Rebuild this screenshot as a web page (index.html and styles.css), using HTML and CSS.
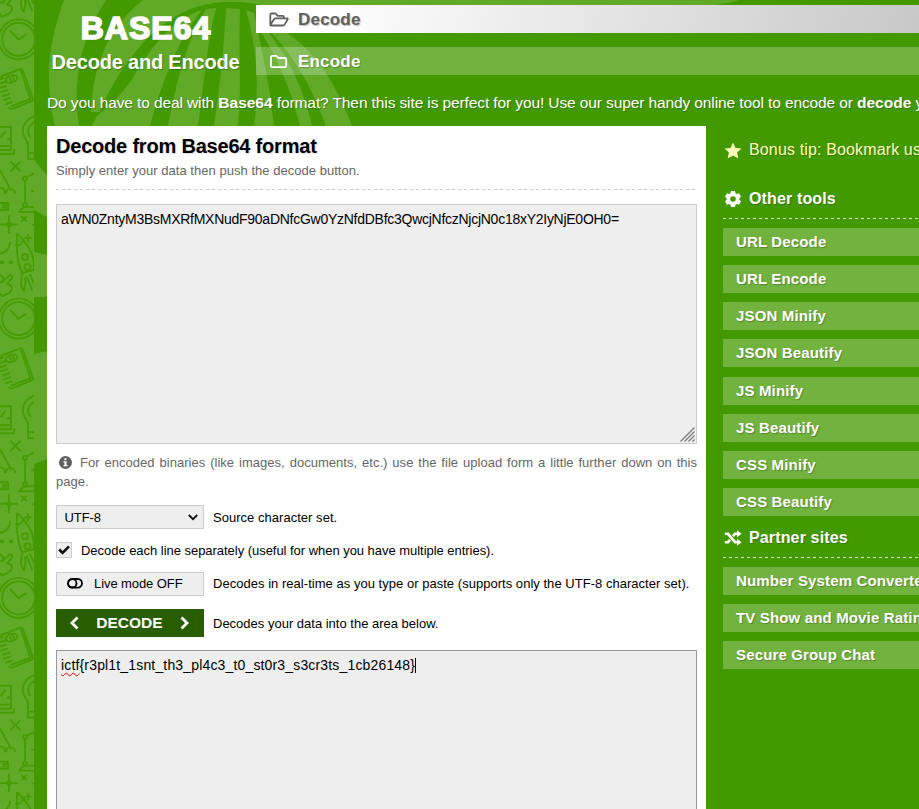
FILE: index.html
```html
<!DOCTYPE html>
<html lang="en">
<head>
<meta charset="utf-8">
<title>Base64 Decode and Encode</title>
<link rel="stylesheet" href="styles.css">
</head>
<body>
<svg class="backdrop" width="919" height="809" viewBox="0 0 919 809" aria-hidden="true">
  <g class="leaf">
    <path d="M64 0C54 28 49 52 49 74C49 94 51 112 55 126L79 126C76 106 76 92 78 76C80 52 90 24 106 0Z"/>
    <path d="M143 0L739 0Q727 4 715 5L262 5Q228 -2 200 6C178 12 158 26 142 44C124 64 110 88 99 112L91 112C92 84 98 60 110 38C118 24 130 10 143 0Z"/>
    <path d="M202 10C178 38 160 88 150 126L92 126L97 116C112 104 124 92 134 76C150 50 170 20 202 10Z"/>
    <path d="M206 9L216 8C208 38 204 84 198 126L168 126C176 84 186 42 206 9Z"/>
    <path d="M226 8L240 9C238 44 242 84 238 126L214 126C220 84 224 48 226 8Z"/>
    <path d="M246 10L254 13C260 42 270 84 274 126L254 126C260 84 256 44 246 10Z"/>
    <path d="M256 24C272 48 290 84 300 126L312 126C302 82 284 48 256 18Z"/>
    <path d="M256 18C302 32 332 72 352 126L326 126C310 82 290 48 256 18Z"/>
    <path d="M34 160Q40 168 47 175L47 217L34 210ZM34 252L47 255L47 297L34 297ZM34 354L47 351L47 459L34 464Z"/>
  </g>
  <rect class="leaf" width="34" height="809"/>
  <svg width="34" height="809">
    <defs>
      <g id="doodles">
        <circle cx="18.7" cy="39.3" r="20"/><circle cx="18.7" cy="39.3" r="16.5"/>
        <path d="M10.500 31l8 8.500 7-4.500"/>
        <path d="M1 76.500L20 69q2-.6 2.700 1l10 28.500q.6 2-1.200 2.600L12 109q-2 .6-2.700-1.200"/>
        <path d="M21 71l9.500 28-19 7M-2 80l5-2M-1 84l6-2M0 88l6-2M1 92l6-2M3 96l6-2M4 100l6-2M6 104l6-2"/>
        <ellipse cx="11.500" cy="79" rx="6" ry="3.500" transform="rotate(-18 11.500 79)"/><path d="M10 78l1 3M13 77l1 3"/>
        <path d="M-1 127H11V150H-1M-1 154H14V150M0 146h9M1 137l4-5"/><circle cx="8.500" cy="139" r=".6"/>
        <path d="M36 116c-9 2-14 9-13 17 .6 5 5 8 5 12v14h8M28 153h7M36 122c-7 2-10 9-6 15"/>
        <path d="M11 162l9 9M20 162l-9 9"/>
        <path d="M0 170L11 190M0 188a4.500 4.500 0 0 1 5 5M6 193a4.500 4.500 0 0 1 9 0"/>
        <circle cx="25" cy="178.500" r="2"/><circle cx="25" cy="205" r="2"/>
        <path d="M25 181v22M27 177l8-4M32 191h3M19 212q4-5 7-5h9M19 212h16"/>
        <path d="M-1 203H8v7H-1M3 205l3 3M6 205l-3 3"/>
        <path d="M9 216v17M1 224.500h16"/><circle cx="9" cy="224.500" r="1.700"/>
        <path d="M22 217l4 4M26 217l-4 4M28 235v6M25 238h6M10 243q-1 9-11 11M33 225h2"/>
        <path class="dots" d="M0 260.500h4v3.500h-4zM9 260.500h4v3.500h-4z"/>
        <path d="M17 234c2 1 11 10 15 20 2 7 2 12 2 16l-12 3c-3-6-5-18-5-24zM16 245h4l4-5"/>
        <circle cx="25" cy="257" r="3"/><circle cx="27.500" cy="267" r="3"/>
        <path d="M22 273l-1 10q0 5 3 8 2-8 1-13M27 277l5 13M30 275l4 8"/>
        <path d="M-1 282h4q2-4-3-7M3 281l7-6q3 0 2 3l-5 6q5 1 5 4 0 5-10 8l-3-3"/>
      </g>
    </defs>
    <use href="#doodles" y="-279.300"/><use href="#doodles"/><use href="#doodles" y="279.300"/><use href="#doodles" y="558.600"/>
  </svg>
</svg>

<div class="page">
  <header class="top">
    <div class="brand">
      <h1>BASE64</h1>
      <p>Decode and Encode</p>
    </div>
    <nav class="tabs">
      <a class="tab active"><svg width="20" height="16" viewBox="0 0 20 16"><path d="M1.300 12.500V2.800Q1.300 1.500 2.600 1.500H6.600L8.600 3.800H13.600Q14.800 3.800 14.800 5V6.300M1.500 12.800L5 7.200Q5.600 6.400 6.500 6.400H18.200Q19.200 6.500 18.600 7.500L15.600 12.600Q15 13.500 14 13.500H2.200Q1 13.500 1.500 12.800Z"/></svg>Decode</a>
      <a class="tab"><svg width="20" height="16" viewBox="0 0 20 16"><path d="M2 12V3Q2 1.800 3.200 1.800H7.400L9.400 4H16Q17.200 4 17.200 5.200V12Q17.200 13.200 16 13.200H3.200Q2 13.200 2 12Z"/></svg>Encode</a>
    </nav>
  </header>
  <p class="intro">Do you have to deal with <b>Base64</b> format? Then this site is perfect for you! Use our super handy online tool to encode or <b>decode</b> your data.</p>

  <div class="columns">
    <main class="panel">
      <h2>Decode from Base64 format</h2>
      <p class="sub">Simply enter your data then push the decode button.</p>
      <div class="rule"></div>
      <div class="area input">aWN0ZntyM3BsMXRfMXNudF90aDNfcGw0YzNfdDBfc3QwcjNfczNjcjN0c18xY2IyNjE0OH0=<svg class="grip" width="15" height="15" viewBox="0 0 15 15"><path d="M.5 14.500L14.500.5M4.500 14.500L14.500 4.500M8.500 14.500L14.500 8.500M12.500 14.500L14.500 12.500"/></svg></div>
      <p class="info"><svg width="13" height="13" viewBox="0 0 13 13"><circle cx="6.500" cy="6.500" r="6.500"/><path d="M5.300 2.300h2.200v1.900H5.300zM4.500 5.200h3v3.900h1v1.200h-4V9.100h1V6.400h-1z"/></svg>For encoded binaries (like images, documents, etc.) use the file upload form a little further down on this page.</p>
      <div class="row charset"><div class="box select">UTF-8<svg width="10" height="7" viewBox="0 0 10 7"><path d="M.8 1L5 5.200 9.200 1"/></svg></div><span>Source character set.</span></div>
      <div class="row lines"><i class="check"><svg width="14" height="14" viewBox="0 0 14 14"><path d="M2.200 6.500L5.600 10 12 3.300"/></svg></i><span>Decode each line separately (useful for when you have multiple entries).</span></div>
      <div class="row live"><div class="box toggle"><svg width="16" height="11" viewBox="0 0 16 11"><rect x="1" y="1" width="14" height="8.600" rx="4.300"/><circle cx="5.300" cy="5.300" r="4.200"/></svg>Live mode OFF</div><span>Decodes in real-time as you type or paste (supports only the UTF-8 character set).</span></div>
      <div class="row run"><div class="submit"><svg width="9" height="14" viewBox="0 0 9 14"><path d="M7.500 1.500L2 7 7.500 12.500"/></svg>DECODE<svg width="9" height="14" viewBox="0 0 9 14"><path d="M1.500 1.500L7 7 1.500 12.500"/></svg></div><span>Decodes your data into the area below.</span></div>
      <div class="area output"><span class="typo">ictf</span>{r3pl1t_1snt_th3_pl4c3_t0_st0r3_s3cr3ts_1cb26148}<i class="caret"></i></div>
    </main>

    <aside class="side">
      <p class="tip"><svg width="18" height="17" viewBox="0 0 18 17"><path d="M9 .5l2.500 5.400 5.900.7-4.300 4 1.200 5.900L9 13.600l-5.300 2.900 1.200-5.900-4.300-4 5.900-.7z"/></svg>Bonus tip: Bookmark us!</p>
      <h3 class="tools"><svg width="18" height="18" viewBox="0 0 18 18"><path fill-rule="evenodd" d="M7 1h4l.5 2.300 1.200.7 2.300-.8 2 3.500-1.700 1.600v1.400l1.700 1.600-2 3.500-2.300-.8-1.200.7L11 17H7l-.5-2.300-1.200-.7-2.300.8-2-3.500 1.700-1.600V8.300L1 6.700l2-3.500 2.300.8 1.200-.7zM9 6.200a2.800 2.800 0 1 0 0 5.600a2.800 2.800 0 1 0 0-5.600z"/></svg>Other tools</h3>
      <div class="rule light"></div>
      <ul>
        <li>URL Decode</li><li>URL Encode</li><li>JSON Minify</li><li>JSON Beautify</li><li>JS Minify</li><li>JS Beautify</li><li>CSS Minify</li><li>CSS Beautify</li>
      </ul>
      <h3 class="partners"><svg width="18" height="16" viewBox="0 0 18 16"><path class="line" d="M.8 3.800H4L11 12.200H14M.8 12.200H4L6 9.800M8.900 6.200L11 3.800H14"/><path d="M13 .3L17.600 3.800 13 7.300zM13 8.700L17.600 12.200 13 15.700z"/></svg>Partner sites</h3>
      <div class="rule light"></div>
      <ul>
        <li>Number System Converter</li><li>TV Show and Movie Ratings</li><li>Secure Group Chat</li>
      </ul>
    </aside>
  </div>
</div>
</body>
</html>
```
FILE: styles.css
```css
* { box-sizing: border-box; }
html, body { margin: 0; height: 809px; overflow: hidden; }
body {
  position: relative;
  background: #439a00;
  font-family: "Liberation Sans", Arial, sans-serif;
  color: #fff;
}
h1, h2, h3, p, ul { margin: 0; padding: 0; }
svg { flex: none; display: block; }

.backdrop { position: absolute; left: 0; top: 0; }
.leaf { fill: #61aa28; }
#doodles { fill: none; stroke: #439a00; stroke-width: 1.9; stroke-linecap: round; stroke-linejoin: round; opacity: .85; }
#doodles .dots { fill: #439a00; stroke: none; }

.page { position: relative; height: 809px; padding-left: 47px; overflow: hidden; }
.top { display: flex; height: 75px; padding-top: 5px; text-shadow: 1px 1px 1px rgba(0, 0, 0, .25); }
.brand { width: 209px; padding-right: 11px; text-align: center; white-space: nowrap; }
.brand h1 { font-size: 32px; line-height: 38px; padding-top: 4px; letter-spacing: 1px; -webkit-text-stroke: 1.7px #fff; }
.brand p { font-size: 20px; font-weight: bold; line-height: 24px; margin-top: 3px; letter-spacing: -.2px; margin-left: -1px; }
.tabs { flex: 1; display: flex; flex-direction: column; gap: 14px; }
.tab { display: flex; align-items: center; height: 28px; padding: 1px 0 0 13px; gap: 9px; background: rgba(255, 255, 255, .25); font-size: 17px; font-weight: bold; letter-spacing: .2px; }
.tab svg { fill: none; stroke: currentColor; stroke-width: 1.8; stroke-linejoin: round; }
.tab.active { background: linear-gradient(105deg, #fff 10%, #c8c8c8 100%); color: #606060; }
.intro { height: 51px; padding-top: 18px; line-height: 20px; font-size: 15.5px; letter-spacing: -.11px; white-space: nowrap; text-shadow: 1px 1px 1px rgba(0, 0, 0, .25); }
.intro b { letter-spacing: 0; }

.columns { display: flex; height: 683px; }
.panel { width: 659px; flex: none; padding: 8px 9px 0; background: #fff; color: #000; font-size: 13px; letter-spacing: .03px; }
.panel h2 { font-size: 20px; line-height: 24px; letter-spacing: -.2px; text-shadow: 1px 1px 2px rgba(0, 0, 0, .15); }
.sub { color: #666; line-height: 18px; margin-top: 4px; }
.rule { height: 1px; margin-top: 9px; background: repeating-linear-gradient(90deg, #ccc 0 3px, transparent 3px 6px); }
.rule.light { background: repeating-linear-gradient(90deg, rgba(255, 255, 255, .75) 0 3px, transparent 3px 6px); }
.area { position: relative; border: 1px solid #ccc; background: #eee; font-size: 14px; line-height: 18px; padding: 5px 4px; white-space: nowrap; }
.input { height: 240px; margin-top: 14px; letter-spacing: -.265px; }
.grip { position: absolute; right: 1px; bottom: 1px; stroke: #777; stroke-width: 1.2; }
.info { color: #666; line-height: 19px; margin-top: 9px; text-align: justify; }
.info svg { display: inline-block; vertical-align: -2px; margin: 0 8px 0 3px; fill: #606060; }
.info path { fill: #fff; }
.row { display: flex; align-items: center; height: 24px; white-space: nowrap; }
.row > span { margin-left: 9px; }
.box { display: flex; align-items: center; width: 148px; height: 24px; border: 1px solid #ccc; background: #eee; }
.charset { margin-top: 14px; }
.select { justify-content: space-between; padding: 0 5px 0 7.5px; letter-spacing: -.1px; }
.select svg, .check svg { fill: none; stroke: #111; stroke-width: 1.8; }
.lines { height: 16px; margin-top: 13px; letter-spacing: -.035px; }
.check { width: 16px; height: 16px; border: 1px solid #ccc; background: #eee; }
.check svg { stroke-width: 2.6; }
.live { margin-top: 14px; }
.toggle { padding: 0 0 1px 10px; gap: 11px; letter-spacing: -.08px; }
.toggle svg { fill: none; stroke: #000; stroke-width: 1.8; }
.live > span { margin-top: -1px; }
.run { height: 28px; margin-top: 13px; letter-spacing: 0; }
.submit { display: flex; align-items: center; justify-content: space-between; width: 148px; height: 28px; padding: 0 15px 0 14px; background: #285d00; color: #fff; font-size: 15.5px; font-weight: bold; letter-spacing: 0; }
.submit svg { fill: none; stroke: #fff; stroke-width: 2.8; }
.output { height: 200px; margin-top: 13px; border-color: #999; letter-spacing: .16px; }
.typo { text-decoration: underline wavy #e00 1px; text-underline-offset: 2px; text-decoration-skip-ink: none; }
.caret { display: inline-block; width: 1px; height: 15px; background: #000; vertical-align: -3px; }

.side { flex: none; width: 260px; margin-left: 17px; text-shadow: 1px 1px 1px rgba(0, 0, 0, .25); white-space: nowrap; }
.tip, .side h3 { display: flex; align-items: center; height: 20px; padding-left: 1px; gap: 7px; font-size: 16px; letter-spacing: .14px; }
.side svg { fill: currentColor; }
.side .line { fill: none; stroke: currentColor; stroke-width: 2.6; }
.tip { margin-top: 14px; color: #ffb; }
.tools { margin-top: 29px; }
.partners { margin-top: 12px; }
.side ul { list-style: none; display: flex; flex-direction: column; gap: 9.150px; margin-top: 9px; }
.side li { height: 28px; line-height: 28px; padding-left: 13px; background: rgba(255, 255, 255, .25); font-size: 15px; font-weight: bold; letter-spacing: .15px; }
```
